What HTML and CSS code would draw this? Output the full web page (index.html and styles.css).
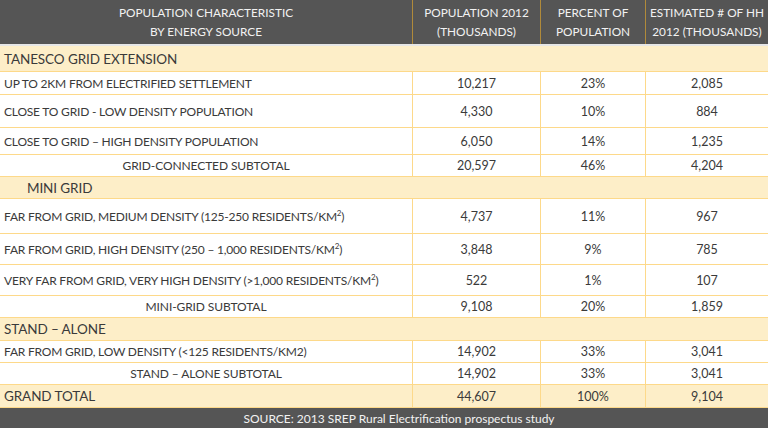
FILE: index.html
```html
<!DOCTYPE html>
<html>
<head>
<meta charset="utf-8">
<link rel="stylesheet" href="styles.css">
</head>
<body>
<div class="table">
  <div class="row head">
    <div class="cell"><span>POPULATION CHARACTERISTIC<br>BY ENERGY SOURCE</span></div>
    <div class="cell"><span>POPULATION 2012<br>(THOUSANDS)</span></div>
    <div class="cell"><span>PERCENT OF<br>POPULATION</span></div>
    <div class="cell"><span>ESTIMATED # OF HH<br>2012 (THOUSANDS)</span></div>
  </div>
  <div class="row section h26"><div class="cell"><span>TANESCO GRID EXTENSION</span></div></div>
  <div class="row h23"><div class="cell label"><span>UP TO 2KM FROM ELECTRIFIED SETTLEMENT</span></div><div class="cell">10,217</div><div class="cell">23%</div><div class="cell">2,085</div></div>
  <div class="row h33"><div class="cell label"><span>CLOSE TO GRID - LOW DENSITY POPULATION</span></div><div class="cell">4,330</div><div class="cell">10%</div><div class="cell">884</div></div>
  <div class="row h27"><div class="cell label"><span>CLOSE TO GRID – HIGH DENSITY POPULATION</span></div><div class="cell">6,050</div><div class="cell">14%</div><div class="cell">1,235</div></div>
  <div class="row h22"><div class="cell sub"><span>GRID-CONNECTED SUBTOTAL</span></div><div class="cell">20,597</div><div class="cell">46%</div><div class="cell">4,204</div></div>
  <div class="row section h22"><div class="cell indent"><span>MINI GRID</span></div></div>
  <div class="row h35"><div class="cell label"><span>FAR FROM GRID, MEDIUM DENSITY (125-250 RESIDENTS/KM<sup>2</sup>)</span></div><div class="cell">4,737</div><div class="cell">11%</div><div class="cell">967</div></div>
  <div class="row h31"><div class="cell label"><span>FAR FROM GRID, HIGH DENSITY (250 – 1,000 RESIDENTS/KM<sup>2</sup>)</span></div><div class="cell">3,848</div><div class="cell">9%</div><div class="cell">785</div></div>
  <div class="row h31"><div class="cell label"><span>VERY FAR FROM GRID, VERY HIGH DENSITY (&gt;1,000 RESIDENTS/KM<sup>2</sup>)</span></div><div class="cell">522</div><div class="cell">1%</div><div class="cell">107</div></div>
  <div class="row h22"><div class="cell sub"><span>MINI-GRID SUBTOTAL</span></div><div class="cell">9,108</div><div class="cell">20%</div><div class="cell">1,859</div></div>
  <div class="row section h23"><div class="cell"><span>STAND – ALONE</span></div></div>
  <div class="row h22"><div class="cell label"><span>FAR FROM GRID, LOW DENSITY (&lt;125 RESIDENTS/KM2)</span></div><div class="cell">14,902</div><div class="cell">33%</div><div class="cell">3,041</div></div>
  <div class="row h22"><div class="cell sub"><span>STAND – ALONE SUBTOTAL</span></div><div class="cell">14,902</div><div class="cell">33%</div><div class="cell">3,041</div></div>
  <div class="row total h23"><div class="cell label big"><span>GRAND TOTAL</span></div><div class="cell">44,607</div><div class="cell">100%</div><div class="cell">9,104</div></div>
  <div class="foot">SOURCE: 2013 SREP Rural Electrification prospectus study</div>
</div>
</body>
</html>
```
FILE: styles.css
```css
* { box-sizing: border-box; }
html, body { margin: 0; padding: 0; background: #ffffff; }
body {
  font-family: Lato, "Open Sans", sans-serif;
  font-size: 12.5px;
  color: #3a3a3a;
  width: 768px;
  height: 428px;
  overflow: hidden;
}
.table { display: flex; flex-direction: column; }
.row {
  display: grid;
  grid-template-columns: 412px 128px 105px 123px;
  border-bottom: 1px solid #fdd98a;
}
.row .cell {
  display: flex;
  align-items: center;
  justify-content: center;
  text-align: center;
  border-left: 1px solid #fdd98a;
  white-space: nowrap;
}
.row .cell:first-child { border-left: none; }
.row .cell.label {
  justify-content: flex-start;
  padding-left: 4px;
  font-size: 12px;
  letter-spacing: -0.2px;
}
.row .cell.sub { font-size: 12px; letter-spacing: -0.1px; }
.head {
  height: 46px;
  background: #555555;
  color: #f2f2f2;
  font-size: 11.8px;
  line-height: 19px;
  border-bottom: 2px solid #e6e6e6;
}
.head .cell { border-left-color: #b08a3a; }
.section {
  display: flex;
  background: #fdeec8;
  font-size: 13.5px;
  letter-spacing: -0.1px;
}
.section .cell { justify-content: flex-start; padding-left: 4px; }
.section .cell.indent { padding-left: 27px; }
.total { background: #fdeec8; }
.row .cell.label.big { font-size: 13.5px; letter-spacing: -0.1px; }
.h22 { height: 22px; }
.h23 { height: 23px; }
.h26 { height: 26px; }
.h27 { height: 27px; }
.h31 { height: 31px; }
.h33 { height: 33px; }
.h35 { height: 35px; }
sup { font-size: 8px; vertical-align: 5px; line-height: 0; }
.foot {
  height: 20px;
  background: #555555;
  color: #f2f2f2;
  font-size: 12px;
  display: flex;
  align-items: center;
  justify-content: center;
  padding-left: 30px;
}
```
